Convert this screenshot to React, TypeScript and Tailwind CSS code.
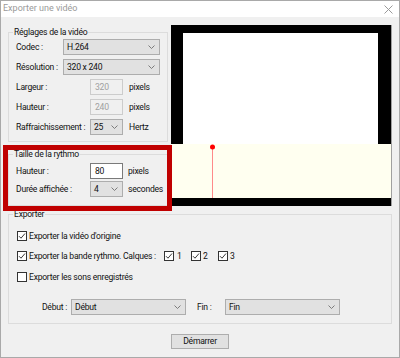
const font = { fontFamily: "Roboto, 'Liberation Sans', sans-serif" };

function Chevron() {
  return (
    <svg width="7" height="4" viewBox="0 0 7 4" className="shrink-0">
      <path d="M0.5 0.5 L3.5 3.5 L6.5 0.5" fill="none" stroke="#707070" strokeWidth="0.9" />
    </svg>
  );
}

function Select({ value, w }: { value: string; w: string }) {
  return (
    <div className={`${w} h-[16px] flex items-center justify-between bg-[#e1e1e1] border border-[#adadad] pl-[3px] pr-[4px] text-[#111]`}>
      <span>{value}</span>
      <Chevron />
    </div>
  );
}

function Input({ value, disabled }: { value: string; disabled?: boolean }) {
  return (
    <div
      className={
        disabled
          ? "w-[33px] h-[16px] flex items-center pl-[4px] bg-[#f0f0f0] border border-[#cccccc] text-[#a0a0a0]"
          : "w-[33px] h-[16px] flex items-center pl-[4px] bg-white border border-[#7a7a7a] text-[#111]"
      }
    >
      {value}
    </div>
  );
}

function Check({ checked }: { checked: boolean }) {
  return (
    <div className="w-[10px] h-[10px] border border-[#333] bg-white flex items-center justify-center shrink-0">
      {checked && (
        <svg width="8" height="8" viewBox="0 0 8 8">
          <path d="M1 4.2 L3 6.2 L7 1.5" fill="none" stroke="#222" strokeWidth="0.9" />
        </svg>
      )}
    </div>
  );
}

export default function App() {
  return (
    <div style={font} className="w-[400px] h-[358px] bg-[#f0f0f0] border border-[#a9a9a9] text-[8.6px] tracking-[-0.25px] text-[#111] flex flex-col whitespace-nowrap">
      {/* TITLE */}
      <div className="h-[16px] bg-white flex items-center justify-between pl-[2px] pr-[6px] text-[9px] tracking-normal text-[#9a9a9a]">
        <span>Exporter une vidéo</span>
        <svg width="9" height="9" viewBox="0 0 9 9">
          <path d="M0.5 0.5 L8.5 8.5 M8.5 0.5 L0.5 8.5" stroke="#9a9a9a" strokeWidth="1" />
        </svg>
      </div>

      <div className="px-[7px] pt-[8px] flex flex-col">
        <div className="flex gap-[6px]">
          {/* LEFT COLUMN */}
          <div className="w-[157px] flex flex-col">
            <fieldset className="mt-[1px] border border-[#dcdcdc] px-[7px] pb-[6px] pt-[1px]">
              <legend className="-ml-[3px] px-[1px] leading-[12px]">Réglages de la vidéo</legend>
              <div className="flex flex-col gap-[4px]">
                <div className="flex items-center">
                  <span className="w-[47px]">Codec :</span>
                  <Select value="H.264" w="w-[97px]" />
                </div>
                <div className="flex items-center">
                  <span className="w-[47px]">Résolution :</span>
                  <Select value="320 x 240" w="w-[97px]" />
                </div>
                <div className="flex items-center">
                  <span className="w-[74px]">Largeur :</span>
                  <Input value="320" disabled />
                  <span className="ml-[6px]">pixels</span>
                </div>
                <div className="flex items-center">
                  <span className="w-[74px]">Hauteur :</span>
                  <Input value="240" disabled />
                  <span className="ml-[6px]">pixels</span>
                </div>
                <div className="flex items-center">
                  <span className="w-[74px]">Raffraichissement :</span>
                  <Select value="25" w="w-[33px]" />
                  <span className="ml-[6px]">Hertz</span>
                </div>
              </div>
            </fieldset>

            {/* RYTHMO, highlighted */}
            <div className="relative mt-[6px]">
              <fieldset className="border border-[#dcdcdc] px-[7px] pb-[8px] pt-[3px]">
                <legend className="-ml-[3px] px-[1px] leading-[12px]">Taille de la rythmo</legend>
                <div className="flex flex-col gap-[2px]">
                  <div className="flex items-center">
                    <span className="w-[74px]">Hauteur :</span>
                    <Input value="80" />
                    <span className="ml-[5px]">pixels</span>
                  </div>
                  <div className="flex items-center">
                    <span className="w-[74px]">Durée affichée :</span>
                    <Select value="4" w="w-[33px]" />
                    <span className="ml-[5px]">secondes</span>
                  </div>
                </div>
              </fieldset>
              <div className="absolute -left-[5px] -top-[3px] -right-[7px] -bottom-[5px] border-[5px] border-[#c00000] z-10" />
            </div>
          </div>

          {/* PREVIEW */}
          <div className="w-[221px] h-[181px] flex flex-col border-r border-[#a0a0a0]">
            <div className="h-[8px] bg-black" />
            <div className="h-[111px] flex">
              <div className="w-[12px] bg-black" />
              <div className="flex-1 bg-white" />
              <div className="w-[13px] bg-black" />
            </div>
            <div className="h-[54px] bg-[#fffff0]">
              <svg width="220" height="54" viewBox="0 0 220 54">
                <line x1="41.5" y1="3" x2="41.5" y2="54" stroke="#ff8a8a" strokeWidth="1" />
                <circle cx="41.5" cy="3" r="2.5" fill="#ff0000" />
              </svg>
            </div>
            <div className="h-[8px] bg-black" />
          </div>
        </div>

        {/* EXPORTER */}
        <fieldset className="mt-[2px] border border-[#dcdcdc] pl-[8px] pb-[8px] pt-[9px]">
          <legend className="-ml-[4px] px-[1px] leading-[12px]">Exporter</legend>
          <div className="flex flex-col">
            <div className="h-[14px] flex items-center gap-[2px]">
              <Check checked />
              <span>Exporter la vidéo d'origine</span>
            </div>
            <div className="h-[14px] mt-[6px] flex items-center">
              <Check checked />
              <span className="ml-[2px] w-[135px] shrink-0">Exporter la bande rythmo. Calques :</span>
              <Check checked />
              <span className="ml-[3px] w-[14px]">1</span>
              <Check checked />
              <span className="ml-[2px] w-[15px]">2</span>
              <Check checked />
              <span className="ml-[2px]">3</span>
            </div>
            <div className="h-[14px] mt-[7px] flex items-center gap-[2px]">
              <Check checked={false} />
              <span>Exporter les sons enregistrés</span>
            </div>
            <div className="mt-[15px] flex items-center">
              <span className="ml-[24px] w-[26px] text-right">Début :</span>
              <div className="ml-[4px]">
                <Select value="Début" w="w-[115px]" />
              </div>
              <span className="ml-[11px] w-[28px]">Fin :</span>
              <Select value="Fin" w="w-[115px]" />
            </div>
          </div>
        </fieldset>

        <div className="mt-[10px] flex justify-center">
          <div className="w-[58px] h-[15px] flex items-center justify-center bg-[#e1e1e1] border border-[#adadad]">
            Démarrer
          </div>
        </div>
      </div>
    </div>
  );
}
